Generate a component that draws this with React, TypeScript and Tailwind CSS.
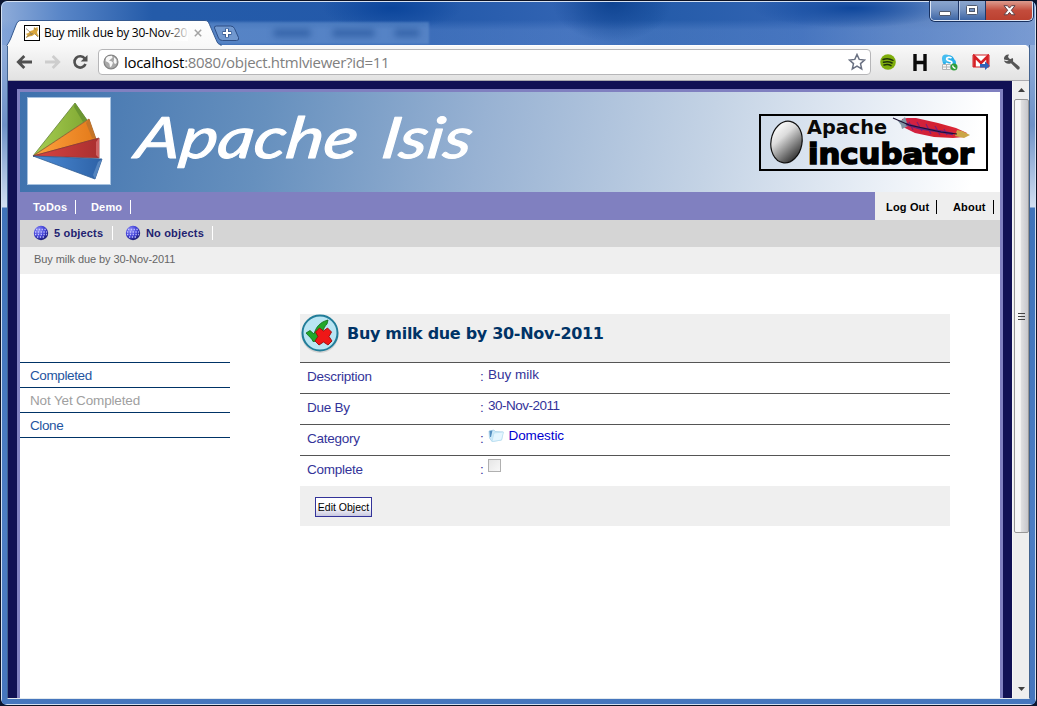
import React from "react";

const arial = "font-['Liberation_Sans',Arial,sans-serif]";
const ui = "font-['Open_Sans','Noto_Sans',sans-serif]";

function WindowControls() {
  return (
    <div className="absolute right-[2px] -top-px flex h-[20px] w-[103px] overflow-hidden rounded-b-[5px] border border-t-0 border-[#dbe5f5] shadow-[0_0_0_1px_#17305f]">
      <div className="flex w-[28px] items-center justify-center border-r border-[#1f3768] bg-linear-to-b from-[#8ba6cf] via-[#7593c2] via-45% to-[#3e66a5] pt-[5px]">
        <div className="h-[5px] w-[12px] rounded-[1px] border border-[#4f5a70] bg-white" />
      </div>
      <div className="flex w-[27px] items-center justify-center border-x border-l-[#b9cae6] border-r-[#1f3768] bg-linear-to-b from-[#8ba6cf] via-[#7593c2] via-45% to-[#3e66a5]">
        <svg width="13" height="11" viewBox="0 0 13 11">
          <rect x="0.5" y="0.5" width="11" height="9" rx="1" fill="#fff" stroke="#4f5a70" />
          <rect x="3.5" y="3.5" width="5" height="3" fill="#7593c2" stroke="#4f5a70" />
        </svg>
      </div>
      <div className="flex flex-1 items-center justify-center bg-linear-to-b from-[#dc9b8e] via-[#c34c3c] via-50% to-[#bb4130]">
        <svg width="13" height="11" viewBox="0 0 13 11">
          <path d="M1 .7h3.500l2 2.400 2-2.400H12L8.300 5.300l3.700 4.500H8.500l-2-2.400-2 2.400H1l3.700-4.500z" fill="#fff" stroke="#5d4147" strokeWidth="1" />
        </svg>
      </div>
    </div>
  );
}

function CatIcon() {
  return (
    <svg width="16" height="16" viewBox="0 0 16 16">
      <rect x="0.5" y="0.5" width="15" height="15" fill="#fff" stroke="#000" />
      <path d="M1.500 9l3-1 2-2 3-1 .5-3 1.500 1 2-1 .5 3-1 2 .5 2 1.500 2.500-2-.5-2-2-3 2-3 .5-3 1.500 1.500-3z" fill="#d9a63c" />
      <path d="M2 3.500l4 3.500 2 3M2 12.500l4-3 3-1M11 9l3 3M10.500 3l1 2" stroke="#8a7a5a" strokeWidth=".8" fill="none" />
    </svg>
  );
}

function TabStrip() {
  return (
    <div className="relative h-[43px] w-full shrink-0">
      <div className="absolute left-[200px] top-[20px] h-[22px] w-[227px] bg-[#6d97d2]/50 blur-[1px]" />
      <div className="absolute left-[271px] top-[27px] h-[8px] w-[38px] rounded bg-[#17488f]/50 blur-[3px]" />
      <div className="absolute left-[330px] top-[27px] h-[8px] w-[43px] rounded bg-[#17488f]/50 blur-[3px]" />
      <div className="absolute left-[392px] top-[27px] h-[8px] w-[26px] rounded bg-[#17488f]/50 blur-[3px]" />
      <svg className="absolute -left-[2px] -top-[2px]" width="250" height="46" viewBox="0 0 250 46">
        <defs>
          <linearGradient id="tab" x1="0" y1="0" x2="0" y2="1">
            <stop offset="0" stopColor="#fff" />
            <stop offset="1" stopColor="#f8f8f8" />
          </linearGradient>
        </defs>
        <path d="M214.500 28q-.5-2 2-2h14q3 0 4 2.500l4 9q1 3-2 3h-14q-3 0-4-2.500z" fill="#7198cf" stroke="#2e4f86" />
        <path d="M227 28.500v9M222.500 33h9" stroke="#3d5f94" strokeWidth="4" />
        <path d="M227 29v8M223 33h8" stroke="#fff" strokeWidth="2" />
        <path d="M6.500 47c0-2 2-3.500 4-8l5.500-14c1.200-3 2.500-4.500 5-4.500h184c2.500 0 3.500 1.500 4.500 4l6.500 15c1.500 3.500 2 5 5 5v3z" fill="url(#tab)" stroke="#35598f" strokeWidth="1" />
      </svg>
      <div className="absolute left-[22px] top-[23px] flex h-[16px] items-center">
        <CatIcon />
        <div className="relative ml-[4px] w-[144px] overflow-hidden">
          <span className={`${ui} block whitespace-nowrap text-[12px] leading-[16px] tracking-[-0.25px] text-black`}>Buy milk due by 30-Nov-20</span>
          <span className="absolute right-0 top-0 h-full w-[22px] bg-linear-to-r from-transparent to-white/90" />
        </div>
        <svg className="ml-[6px]" width="8" height="8" viewBox="0 0 8 8">
          <path d="M.8.8l6.400 6.400M7.200.8L.8 7.200" stroke="#a3a3a3" strokeWidth="1.500" />
        </svg>
      </div>
      <WindowControls />
    </div>
  );
}

function Globe() {
  return (
    <svg width="16" height="16" viewBox="0 0 16 16">
      <circle cx="8" cy="8" r="6.900" fill="#a9a9a9" stroke="#858585" strokeWidth="1.300" />
      <path d="M3 4l2-1.800 4-.4.500 2-2.500 2-1 1 2.500.5 1.500 1.500-1.500 3.500-1.500 1-.500-3.500-1.500-1.500-2.300-1zM11 3.200l2.200 2 .5 3.500-1.700 1.500-1.500-2.500.5-1.700z" fill="#f8f8f8" />
    </svg>
  );
}

function Toolbar() {
  return (
    <div className="flex h-[36px] shrink-0 items-center rounded-tr-[5px] border-b border-[#a9a9ae] bg-linear-to-b from-[#f9f9f9] to-[#e2e2e2] pb-px shadow-[inset_0_1px_0_#fff]">
      <svg className="ml-[8px]" width="17" height="14" viewBox="0 0 17 14">
        <path d="M8.300 1L2.300 7l6 6M2.500 7H16" stroke="#505050" strokeWidth="2.800" fill="none" />
      </svg>
      <svg className="ml-[11px]" width="17" height="14" viewBox="0 0 17 14">
        <path d="M8.700 1l6 6-6 6M14.500 7H1" stroke="#cdcdcd" strokeWidth="2.800" fill="none" />
      </svg>
      <svg className="ml-[11px]" width="17" height="16" viewBox="0 0 17 16">
        <path d="M12.800 4.500A5.700 5.700 0 1 0 13.500 10" stroke="#505050" strokeWidth="2.600" fill="none" />
        <path d="M15.500 1v6.500H8.700z" fill="#505050" />
      </svg>
      <div className="ml-[9px] flex h-[26px] w-[773px] items-center rounded-[4px] border border-[#b6b6b8] bg-white pl-[4px] pr-[4px]">
        <Globe />
        <span className={`${ui} ml-[5px] flex-1 whitespace-nowrap text-[15px] leading-[24px] tracking-[-0.3px] text-[#808080]`}>
          <span className="text-black">localhost</span>:8080/object.htmlviewer?id=11
        </span>
        <svg width="18" height="18" viewBox="0 0 18 18">
          <path d="M9 1.500l2.200 4.900 5.300.6-4 3.600 1.200 5.400L9 13.200 4.300 16l1.200-5.400-4-3.600 5.300-.6z" fill="#fff" stroke="#6a7182" strokeWidth="1.500" />
        </svg>
      </div>
      <svg className="ml-[9px]" width="16" height="16" viewBox="0 0 16 16">
        <circle cx="8" cy="8" r="7.800" fill="#7fae0c" />
        <path d="M3 5.500q5-2 10 .8M3.500 8.300q4.500-1.600 8.600.7M4 11q4-1.300 7 .6" stroke="#20340b" strokeWidth="1.500" fill="none" strokeLinecap="round" />
      </svg>
      <svg className="ml-[17px]" width="14" height="17" viewBox="0 0 14 17">
        <path d="M2 0v17M12 0v17M2 8.500h10" stroke="#0a0a0a" strokeWidth="3.400" />
      </svg>
      <svg className="ml-[14px]" width="17" height="17" viewBox="0 0 17 17">
        <circle cx="7.500" cy="7" r="6" fill="#28aee8" />
        <circle cx="5" cy="4.500" r="4" fill="#45bdf0" />
        <circle cx="11" cy="9" r="4" fill="#28aee8" />
        <path d="M10.500 4.200C9 2.700 5.600 3 5.600 5c0 2.400 5.300 1.200 5.300 3.600 0 2.300-4.200 2.300-5.800.4" stroke="#fff" strokeWidth="1.700" fill="none" />
        <path d="M1.500 10.500h8v5h-8zM1.500 13h8M5.500 10.500v5" stroke="#b4b4b4" fill="#f8f8f8" />
        <circle cx="13" cy="13" r="3.500" fill="#2f9d37" />
        <path d="M11.500 11.500q.5 2.500 3 3" stroke="#fff" strokeWidth="1.300" fill="none" />
      </svg>
      <svg className="ml-[14px]" width="18" height="16" viewBox="0 0 18 16">
        <path d="M1 1h16v12H1z" fill="#fff" stroke="#d51f24" strokeWidth="1" />
        <path d="M2.500 13V2.500L9 9l6.500-6.500V13" stroke="#d51f24" strokeWidth="2.600" fill="none" />
        <path d="M8 10h5V7.500l4.800 4.300L13 16v-2.500H8z" fill="#2f62b9" />
      </svg>
      <svg className="ml-[13px]" width="18" height="17" viewBox="0 0 18 17">
        <path d="M1 5.500C.5 2.500 3 .3 6 .6L5 3l2 2.200L9.700 4c.6 1.300.5 2.400.2 3.200l6.500 5.600c1 1-.5 3.400-2 2.800L8 9.200C4.800 10.700 1.500 9 1 6.500l3 .8 1.800-.8z" fill="#555" />
      </svg>
    </div>
  );
}

function IsisMark() {
  return (
    <div className="h-[88px] w-[84px] border border-[#a7c2df] bg-white">
      <svg width="82" height="86" viewBox="0 0 82 86">
        <defs>
          <linearGradient id="g"><stop offset="0" stopColor="#a8cf52" /><stop offset="1" stopColor="#80a833" /></linearGradient>
          <linearGradient id="o"><stop offset="0" stopColor="#ffa33f" /><stop offset="1" stopColor="#e37a1a" /></linearGradient>
          <linearGradient id="r"><stop offset="0" stopColor="#da4542" /><stop offset="1" stopColor="#a92f2f" /></linearGradient>
          <linearGradient id="b"><stop offset="0" stopColor="#4c8bd5" /><stop offset="1" stopColor="#2d62a7" /></linearGradient>
        </defs>
        <path d="M5 58L47 5l12 17z" fill="url(#g)" stroke="#63813a" strokeWidth=".8" />
        <path d="M47 5l12 17-4 2-9-15z" fill="#6b9631" />
        <path d="M5 58l56-37 7 20z" fill="url(#o)" stroke="#98602a" strokeWidth=".8" />
        <path d="M58 25l3-4 7 20-4-1z" fill="#c57528" />
        <path d="M5 58l66-18v20z" fill="url(#r)" stroke="#893536" strokeWidth=".8" />
        <path d="M68 44l3-4v20l-3-3z" fill="#cf6464" />
        <path d="M5 58l69 3-7 20z" fill="url(#b)" stroke="#315e94" strokeWidth=".8" />
        <path d="M70 64l4-3-7 20-2-4z" fill="#5585bf" />
      </svg>
    </div>
  );
}

function IncubatorBadge() {
  return (
    <svg width="229" height="57" viewBox="0 0 229 57">
      <defs>
        <linearGradient id="egg" x1="0.1" y1="0.1" x2="0.85" y2="0.9">
          <stop offset="0" stopColor="#fff" />
          <stop offset=".35" stopColor="#dcdcdc" />
          <stop offset="1" stopColor="#303030" />
        </linearGradient>
        <linearGradient id="feather">
          <stop offset="0" stopColor="#d32248" />
          <stop offset=".6" stopColor="#d3202f" />
          <stop offset="1" stopColor="#e12c3e" />
        </linearGradient>
      </defs>
      <rect x="1" y="1" width="227" height="55" fill="none" stroke="#000" strokeWidth="2" />
      <ellipse cx="27.500" cy="28" rx="15.500" ry="21" fill="url(#egg)" stroke="#111" strokeWidth="1.200" transform="rotate(10 27.500 28)" />
      <text x="48" y="20" fontFamily="'DejaVu Sans', sans-serif" fontWeight="700" fontSize="20" textLength="80" lengthAdjust="spacingAndGlyphs" fill="#080808">Apache</text>
      <text x="49" y="49.500" fontFamily="'DejaVu Sans', sans-serif" fontWeight="700" fontSize="29" textLength="166" lengthAdjust="spacingAndGlyphs" fill="#000" stroke="#000" strokeWidth="1.600">incubator</text>
      <path d="M143 5l5-1 9 0 22 5 18 5 11 5-3 4-11 1-19-1-19-4-10-5-4-4z" fill="url(#feather)" />
      <path d="M139 7l4-1 3-3 3 9-6 3-1-4z" fill="#8296a5" />
      <path d="M198 16l5 1 8 4-6 3-9-2z" fill="#cba647" />
      <path d="M150 8l4 8M158 8l5 9M167 10l5 10M176 12l5 9M185 15l3 6" stroke="#7d2078" strokeWidth="1.200" fill="none" />
      <path d="M147 10l13 4 24 4 10 2" stroke="#61237f" strokeWidth="2.600" fill="none" />
      <path d="M134 4l16 7 32 7 16 2" stroke="#1b1030" strokeWidth="1.100" fill="none" />
    </svg>
  );
}

function Banner() {
  return (
    <div className="flex h-[100px] shrink-0 items-start bg-[linear-gradient(100deg,#3e71ad_0%,#6690be_25%,#98b2d3_47%,#c4d3e5_70%,#e4ebf4_85%,#fff_97%)]">
      <div className="ml-[7px] mt-[5px]"><IsisMark /></div>
      <svg className="ml-[17px]" width="370" height="100" viewBox="0 0 370 100">
        <g transform="skewX(-8)" fill="#fff" stroke="#fff" strokeWidth="1" strokeLinejoin="round" fontFamily="Lato, sans-serif" fontStyle="italic" fontSize="57">
          <text x="15" y="66" textLength="222" lengthAdjust="spacingAndGlyphs">Apache</text>
          <text x="261" y="66" textLength="90" lengthAdjust="spacingAndGlyphs">Isis</text>
        </g>
      </svg>
      <div className="ml-auto mr-[12px] mt-[22px]"><IncubatorBadge /></div>
    </div>
  );
}

function MenuItem({ label, className }: { label: string; className: string }) {
  return <span className={`${arial} whitespace-nowrap border-r text-[11px] font-bold leading-[14px] tracking-[0.17px] ${className}`}>{label}</span>;
}

function MenuBar() {
  return (
    <div className="flex h-[28px] shrink-0 bg-[#8080c0]">
      <div className="flex flex-1 items-center pl-[13px] pt-[2px]">
        <MenuItem label="ToDos" className="w-[43px] border-white text-white" />
        <MenuItem label="Demo" className="ml-[15px] w-[40px] border-white text-white" />
      </div>
      <div className="flex w-[125px] items-center bg-[#eeeeee] pl-[11px] pt-[2px]">
        <MenuItem label="Log Out" className="w-[51px] border-black text-black" />
        <MenuItem label="About" className="ml-[16px] w-[41px] border-black text-black" />
      </div>
    </div>
  );
}

function Ball() {
  return (
    <svg width="16" height="16" viewBox="0 0 16 16">
      <defs>
        <radialGradient id="ball" cx=".35" cy=".3" r=".75">
          <stop offset="0" stopColor="#9494f6" />
          <stop offset=".55" stopColor="#4040d8" />
          <stop offset="1" stopColor="#1c1c70" />
        </radialGradient>
      </defs>
      <circle cx="8" cy="8" r="7.200" fill="url(#ball)" />
      <path d="M3 4.500h10M2 7h12M2 9.500h12M4 12h8" stroke="#c4c4ff" strokeWidth="1.300" strokeDasharray="1.300 1.500" />
    </svg>
  );
}

function Toolstrip() {
  return (
    <div className="flex h-[27px] shrink-0 items-center bg-[#d5d5d5] pb-px pl-[13px]">
      <Ball />
      <MenuItem label="5 objects" className="ml-[5px] w-[59px] border-white text-[#222270]" />
      <div className="ml-[12px] flex"><Ball /></div>
      <MenuItem label="No objects" className="ml-[5px] w-[67px] border-white text-[#222270]" />
    </div>
  );
}

function Sidebar() {
  const row = `${arial} h-[25px] border-b border-[#003366] pl-[10px] text-[13.5px] leading-[25px]`;
  return (
    <div className="mt-[88px] w-[210px] self-start border-t border-[#003366]">
      <div className={`${row} tracking-[-0.38px] text-[#1f55a0]`}>Completed</div>
      <div className={`${row} tracking-[-0.15px] text-[#a0a0a0]`}>Not Yet Completed</div>
      <div className={`${row} tracking-[-0.4px] text-[#1f55a0]`}>Clone</div>
    </div>
  );
}

function TaskIcon() {
  return (
    <svg width="40" height="40" viewBox="0 0 40 40">
      <circle cx="20" cy="20.500" r="18.500" fill="#b5b5b5" opacity=".5" />
      <circle cx="20" cy="19" r="17.500" fill="#b9e5f3" stroke="#217d99" strokeWidth="2" />
      <path d="M6 19l4-2.500 4 3.500c2-7 6-12 14-14l-1 4c-4 4-5 9-6 17l-8 .5c-1-3-4-5-7-8.500z" fill="#21a729" stroke="#0c6c17" strokeWidth=".8" />
      <path d="M15.500 18l4-4 4 3 4-3 4 4-2.500 4.500 3 4.500-4 4-4.500-3-4.500 3-4-4 3-4.500z" fill="#ef1717" stroke="#9e0808" strokeWidth=".9" strokeLinejoin="round" />
    </svg>
  );
}

function Property({ label, last, children, shift }: { label: string; last?: boolean; children: React.ReactNode; shift: string }) {
  return (
    <div className={`flex border-[#555] pl-[7px] text-[13.5px] ${last ? "h-[30px]" : "h-[31px] border-b"}`}>
      <span className="w-[173px] pt-[6px] leading-[15px] tracking-[-0.25px] text-[#333399]">{label}</span>
      <span className="w-[8px] pt-[6px] leading-[15px] text-[#333399]">:</span>
      <span className={`flex items-start whitespace-nowrap leading-[15px] text-[#333399] ${shift}`}>{children}</span>
    </div>
  );
}

function ObjectForm() {
  return (
    <div className={`${arial} ml-[70px] mt-[40px] w-[650px] self-start`}>
      <div className="flex h-[49px] border-b border-[#555] bg-[#efefef]">
        <TaskIcon />
        <h1 className="ml-[7px] mt-[10px] whitespace-nowrap font-['DejaVu_Sans',Verdana,sans-serif] text-[16px] font-bold leading-[20px] tracking-[-0.31px] text-[#003366]">Buy milk due by 30-Nov-2011</h1>
      </div>
      <Property label="Description" shift="pt-[4px]">Buy milk</Property>
      <Property label="Due By" shift="pt-[4px] tracking-[-0.5px]">30-Nov-2011</Property>
      <Property label="Category" shift="pt-[3px]">
        <svg className="mr-[4px] mt-[1px]" width="17" height="14" viewBox="0 0 17 14">
          <path d="M1 2l5-1 1 1.500 8 .5-1.500 8L4 12.500 1.500 9z" fill="#cdeafa" stroke="#a9d1e8" strokeWidth=".8" />
          <path d="M1.500 2l3-.5L3 8 2 8z" fill="#548fc0" />
          <path d="M6 4l9.500-1-2 8L4 12.500z" fill="#e5f6ff" stroke="#b9dff1" strokeWidth=".7" />
        </svg>
        <a className="-ml-[0.5px] tracking-[-0.1px] text-[#0000d0]">Domestic</a>
      </Property>
      <Property label="Complete" last shift="pt-[3px]">
        <span className="block h-[13px] w-[13px] border border-[#b0b0b0] bg-linear-to-br from-[#e6e6e6] to-[#f8f8f8]" />
      </Property>
      <div className="flex h-[40px] bg-[#efefef] pl-[15px] pt-[11px]">
        <button className="h-[20px] w-[57px] whitespace-nowrap border border-[#333399] bg-linear-to-b from-white via-white to-[#c8c8df] text-center text-[10.500px] leading-[18px] text-black">Edit Object</button>
      </div>
    </div>
  );
}

function Scrollbar() {
  return (
    <div className="flex w-[17px] flex-col items-center border-l border-[#f7f7f7] bg-[#eeeeee]">
      <div className="flex h-[18px] items-center justify-center">
        <svg width="7" height="4" viewBox="0 0 7 4"><path d="M0 4L3.500 0 7 4z" fill="#404040" /></svg>
      </div>
      <div className="flex h-[434px] w-[15px] flex-col items-center justify-center gap-[2px] rounded-[2px] border border-[#979797] bg-linear-to-r from-[#f7f7f7] from-40% via-[#dedee0] via-50% to-[#c6c6cb]">
        <span className="h-px w-[7px] bg-[#444]" />
        <span className="h-px w-[7px] bg-[#444]" />
        <span className="h-px w-[7px] bg-[#444]" />
      </div>
      <div className="mb-[7px] mt-auto">
        <svg className="block" width="7" height="4" viewBox="0 0 7 4"><path d="M0 0h7L3.500 4z" fill="#404040" /></svg>
      </div>
    </div>
  );
}

export default function App() {
  return (
    <div className="h-[706px] w-[1037px] overflow-hidden bg-[#0b1530]">
      <div className="flex h-[706px] w-[1037px] flex-col overflow-hidden rounded-[7px] border border-[#0c1224] bg-[#4676bd]">
        <div className="flex min-h-0 flex-1 flex-col rounded-[6px] border border-[#d5e1f2] bg-[radial-gradient(ellipse_70px_22px_at_390px_6px,#0b459b,transparent),radial-gradient(ellipse_60px_40px_at_610px_0px,#0e4391,transparent),radial-gradient(ellipse_100px_20px_at_850px_6px,#0f479c,transparent),linear-gradient(to_bottom,transparent_18px,rgba(110,150,215,0.35)_28px),linear-gradient(to_right,#8dabd9_0px,#5885c7_60px,#245ba9_150px,#2359aa_430px,#3264b3_570px,#245ba9_650px,#3264b3_800px,#5880bf_900px,#809ed0_1037px)] bg-[length:100%_44px] bg-no-repeat">
          <TabStrip />
          <div className="flex min-h-0 flex-1 flex-col bg-[linear-gradient(to_bottom,#91aedb_0px,#6e91c7_80px,#d1dff1_162px,#3f73b9_163px,#4c7dc3_480px,#4676bd_650px)] pl-[5px] pr-[5px] pb-[5px]">
            <div className="flex min-h-0 flex-1 flex-col border-x border-b border-[#42638f] border-b-[#e2e9ee]">
              <Toolbar />
              <div className="flex min-h-0 flex-1">
                <main className="flex min-w-0 flex-1 bg-[#111154] pl-[9px] pr-[9px] pt-[8px]">
                  <div className="flex min-w-0 flex-1 flex-col border-x-[3px] border-t-[3px] border-[#8080c0] bg-white">
                    <Banner />
                    <MenuBar />
                    <Toolstrip />
                    <div className={`${arial} h-[27px] shrink-0 bg-[#efefef] pl-[14px] text-[11px] leading-[25px] tracking-[-0.08px] text-[#666]`}>Buy milk due by 30-Nov-2011</div>
                    <div className="flex min-h-0 flex-1">
                      <Sidebar />
                      <ObjectForm />
                    </div>
                  </div>
                </main>
                <Scrollbar />
              </div>
            </div>
          </div>
        </div>
      </div>
    </div>
  );
}
